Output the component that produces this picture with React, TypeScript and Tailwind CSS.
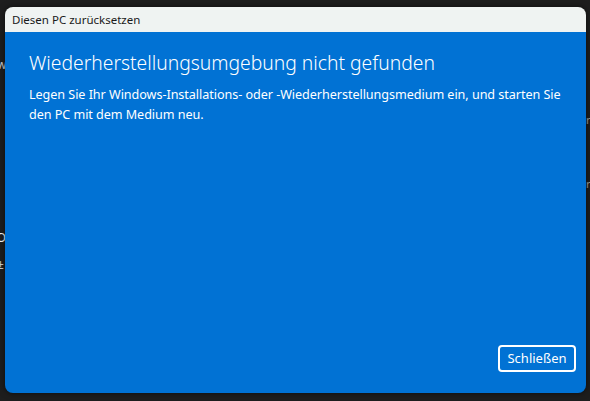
export default function App() {
  return (
    <div className="w-[590px] h-[401px] bg-[#1e1e1e] relative overflow-hidden" style={{ fontFamily: '"Noto Sans", "Open Sans", sans-serif' }}>
      <span className="absolute left-[-3px] top-[56px] text-[12px] text-white/80">w</span>
      <span className="absolute left-[-4px] top-[228px] text-[13px] text-white">O</span>
      <span className="absolute left-[-3px] top-[256px] text-[12px] text-white/80">±</span>
      <span className="absolute left-[586px] top-[112px] text-[11px] text-white/60">r</span>
      <span className="absolute left-[586px] top-[176px] text-[11px] text-white/60">r</span>
      <div className="absolute left-[5px] top-[7px] w-[581px] h-[386px] rounded-[8px] overflow-hidden flex flex-col shadow-[0_0_6px_rgba(0,0,0,0.6)]">
        <div className="h-[25px] bg-[#eff3f2] flex items-center pl-[7px] text-[11.5px] text-[#1a1a1a]">
          Diesen PC zurücksetzen
        </div>
        <div className="flex-1 bg-[#0172d4] flex flex-col pl-[24px] pr-[10px] pt-[16px] pb-[21px] text-white">
          <h1 className="text-[19.3px] font-light leading-[30px]">Wiederherstellungsumgebung nicht gefunden</h1>
          <p className="mt-[7px] pr-[14px] text-[12.6px] leading-[20px] tracking-[-0.05px]">
            Legen Sie Ihr Windows-Installations- oder -Wiederherstellungsmedium ein, und starten Sie den PC mit dem Medium neu.
          </p>
          <div className="mt-auto flex justify-end">
            <button className="w-[78px] h-[27px] border-[2px] border-white rounded-[4px] text-[13px] text-white">Schließen</button>
          </div>
        </div>
      </div>
    </div>
  );
}
